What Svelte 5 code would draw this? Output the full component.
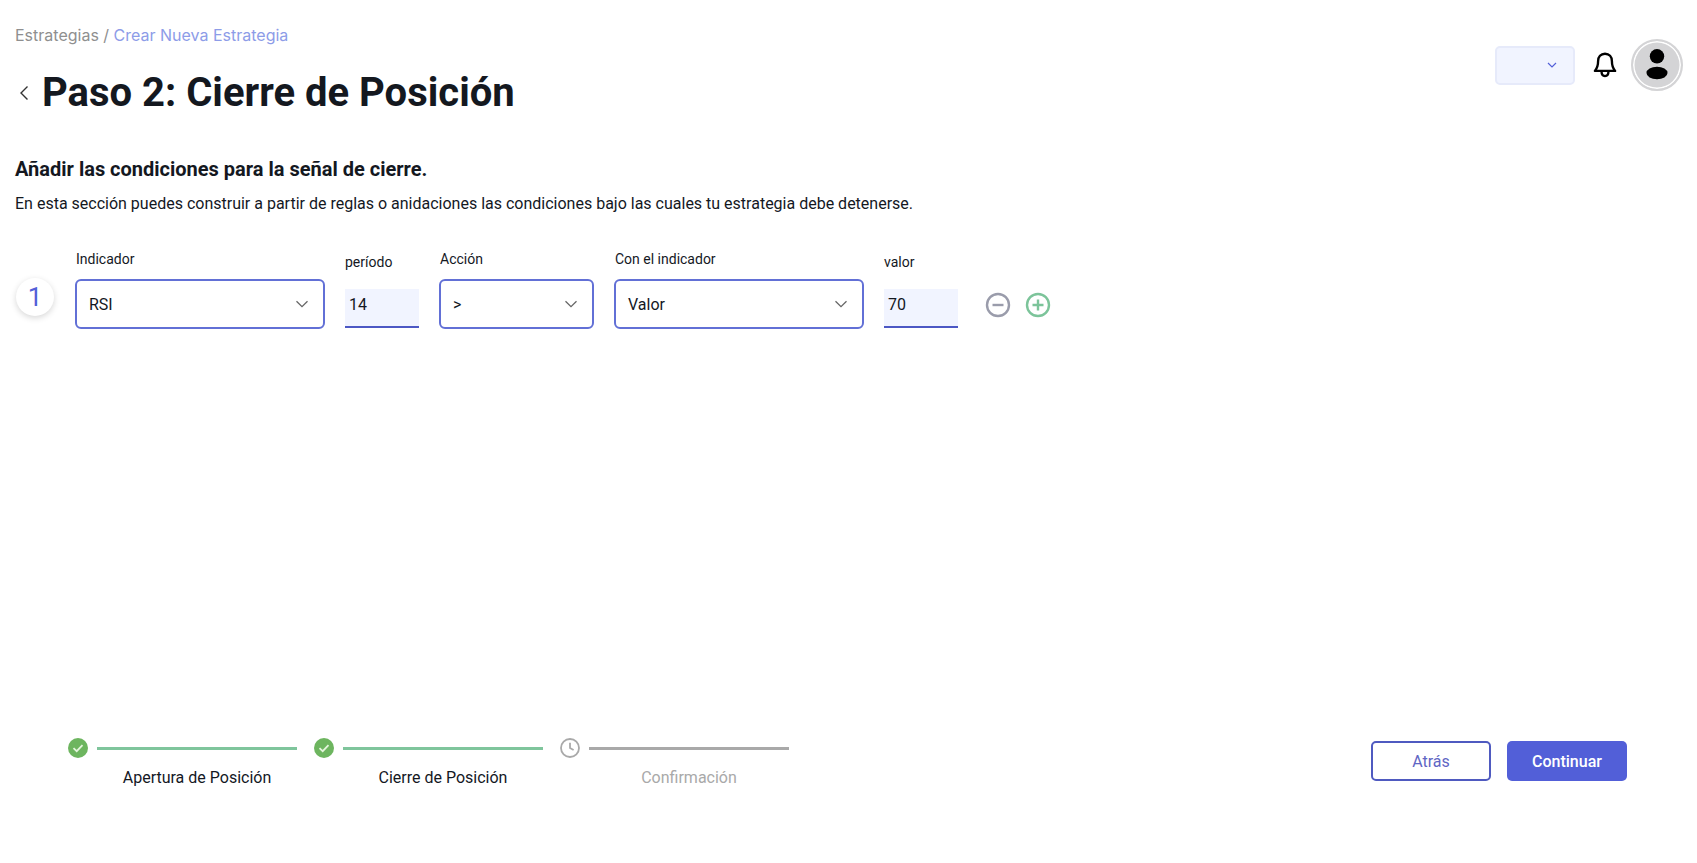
<script lang="ts">
  const steps = [
    { label: 'Apertura de Posición', state: 'done' },
    { label: 'Cierre de Posición', state: 'done' },
    { label: 'Confirmación', state: 'pending' },
  ]
</script>

{#snippet chevron()}
  <svg class="chevron" width="14" height="8" viewBox="0 0 14 8" fill="none" stroke="currentColor" stroke-width="1.3">
    <path d="M1.5 1.2 7 6.7l5.5-5.5"></path>
  </svg>
{/snippet}

{#snippet select(label: string, value: string, width: number)}
  <div class="field" style="width: {width}px">
    <span class="field__label">{label}</span>
    <div class="select">
      <span>{value}</span>
      {@render chevron()}
    </div>
  </div>
{/snippet}

{#snippet numeric(label: string, value: string)}
  <div class="field field--num">
    <span class="field__label">{label}</span>
    <div class="num">{value}</div>
  </div>
{/snippet}

<div class="page">
  <header class="top">
    <div>
      <div class="crumbs">Estrategias / <span class="crumbs__current">Crear Nueva Estrategia</span></div>
      <div class="title-row">
        <svg class="back" width="10" height="16" viewBox="0 0 10 16" fill="none" stroke="#333" stroke-width="1.4">
          <path d="M8.5 1.5 2 8l6.5 6.5"></path>
        </svg>
        <h1>Paso 2: Cierre de Posición</h1>
      </div>
    </div>
    <div class="tools">
      <div class="lang">
        <svg width="10" height="6" viewBox="0 0 10 6" fill="none" stroke="#5360d8" stroke-width="1.2">
          <path d="M1 1l4 4 4-4"></path>
        </svg>
      </div>
      <svg class="bell" width="26" height="28" viewBox="0 0 24 26" fill="none" stroke="#000" stroke-width="2.2" stroke-linejoin="round">
        <path d="M12 2.5c-4 0-6.4 3-6.4 6.8 0 5-1.1 7-3 9.2h18.8c-1.9-2.2-3-4.2-3-9.2 0-3.8-2.4-6.8-6.4-6.8z"></path>
        <path d="M8.8 19c0 2.6 1.3 4.2 3.2 4.2s3.2-1.6 3.2-4.2"></path>
      </svg>
      <div class="avatar">
        <svg width="32" height="36" viewBox="0 0 32 36" fill="#000">
          <circle cx="16" cy="9.3" r="7.2"></circle>
          <ellipse cx="16" cy="26" rx="10.5" ry="6.2"></ellipse>
        </svg>
      </div>
    </div>
  </header>

  <section class="intro">
    <h2>Añadir las condiciones para la señal de cierre.</h2>
    <p>En esta sección puedes construir a partir de reglas o anidaciones las condiciones bajo las cuales tu estrategia debe detenerse.</p>
  </section>

  <section class="rule">
    <div class="rule__index">1</div>
    {@render select('Indicador', 'RSI', 250)}
    {@render numeric('período', '14')}
    {@render select('Acción', '>', 155)}
    {@render select('Con el indicador', 'Valor', 250)}
    {@render numeric('valor', '70')}
    <div class="rule__actions">
      <svg width="26" height="26" viewBox="0 0 26 26" fill="none" stroke="#9a9cab" stroke-width="2.4">
        <circle cx="13" cy="13" r="11"></circle>
        <path d="M7.5 13h11"></path>
      </svg>
      <svg width="26" height="26" viewBox="0 0 26 26" fill="none" stroke="#7cc49a" stroke-width="2.4">
        <circle cx="13" cy="13" r="11"></circle>
        <path d="M7.5 13h11M13 7.5v11"></path>
      </svg>
    </div>
  </section>

  <footer class="bottom">
    <div class="steps">
      {#each steps as step}
        <div class="step" class:step--pending={step.state === 'pending'}>
          <div class="step__track">
            {#if step.state === 'done'}
              <svg width="20" height="20" viewBox="0 0 20 20">
                <circle cx="10" cy="10" r="10" fill="#6db55f"></circle>
                <path d="M5.5 10.2 8.7 13.2 14.5 7.2" fill="none" stroke="#e4f5dc" stroke-width="1.8"></path>
              </svg>
            {:else}
              <svg width="20" height="20" viewBox="0 0 20 20" fill="none" stroke="#a9a9a9" stroke-width="1.8">
                <circle cx="10" cy="10" r="9"></circle>
                <path d="M10 4.8V10l3.6 2"></path>
              </svg>
            {/if}
            <span class="step__line"></span>
          </div>
          <span class="step__label">{step.label}</span>
        </div>
      {/each}
    </div>
    <div class="buttons">
      <button class="btn btn--ghost" type="button">Atrás</button>
      <button class="btn btn--solid" type="button">Continuar</button>
    </div>
  </footer>
</div>

<style>
  :global(body) {
    margin: 0;
    background: #fff;
  }

  .page {
    display: flex;
    flex-direction: column;
    box-sizing: border-box;
    height: 863px;
    padding: 0 14px 0 15px;
    font-family: Roboto, "Liberation Sans", sans-serif;
    color: #14181f;
  }

  /* ── Header ── */
  .top {
    display: flex;
    justify-content: space-between;
    align-items: flex-start;
    padding-top: 25px;
  }

  .crumbs {
    font-family: Inter, "Liberation Sans", sans-serif;
    font-size: 16px;
    line-height: 20px;
    color: #8f8f8f;
  }

  .crumbs__current {
    color: #8d9ce8;
  }

  .title-row {
    display: flex;
    align-items: center;
    gap: 13px;
    margin-top: 24px;
    padding-left: 4px;
  }

  h1 {
    margin: 0;
    font-size: 40px;
    line-height: 48px;
    font-weight: 700;
    color: #14181f;
  }

  .tools {
    display: flex;
    align-items: center;
    margin-top: 14px;
  }

  .lang {
    display: flex;
    align-items: center;
    justify-content: flex-end;
    box-sizing: border-box;
    width: 80px;
    height: 39px;
    padding-right: 16px;
    background: #f1f4ff;
    border: 2px solid #e6eafa;
    border-radius: 5px;
  }

  .bell {
    margin: 0 13px 0 17px;
  }

  .avatar {
    display: flex;
    align-items: center;
    justify-content: center;
    box-sizing: border-box;
    width: 52px;
    height: 52px;
    border-radius: 50%;
    background: #d4d4d6;
    border: 2px solid #d4d4d6;
    box-shadow: inset 0 0 0 1.5px #fff;
  }

  /* ── Intro ── */
  .intro {
    margin-top: 39px;
  }

  h2 {
    margin: 0;
    font-size: 20px;
    line-height: 26px;
    font-weight: 700;
  }

  p {
    margin: 10px 0 0;
    font-size: 16px;
    line-height: 24px;
  }

  /* ── Rule row ── */
  .rule {
    display: flex;
    align-items: flex-end;
    margin-top: 34px;
  }

  .rule__index {
    display: flex;
    align-items: center;
    justify-content: center;
    width: 38px;
    height: 38px;
    margin: 0 21px 13px 1px;
    border-radius: 50%;
    background: #fff;
    box-shadow: 0 2px 6px rgba(0, 0, 0, 0.16);
    font-size: 26px;
    font-weight: 400;
    color: #5360d8;
  }

  .field {
    display: flex;
    flex-direction: column;
    margin-right: 20px;
  }

  .field--num {
    width: 74px;
    margin-bottom: 1px;
  }

  .field__label {
    font-size: 14px;
    line-height: 18px;
    margin: 0 0 11px 1px;
  }

  .field--num .field__label {
    margin: 0 0 18px 0;
  }

  .select {
    display: flex;
    align-items: center;
    justify-content: space-between;
    box-sizing: border-box;
    height: 50px;
    padding: 0 14px 0 12px;
    border: 2px solid #6270d6;
    border-radius: 6px;
    font-size: 16px;
  }

  .chevron {
    color: #666;
  }

  .num {
    box-sizing: border-box;
    height: 39px;
    padding: 6px 4px 0;
    background: #f1f4ff;
    border-bottom: 2px solid #4c58c4;
    font-size: 16px;
    line-height: 20px;
  }

  .rule__actions {
    display: flex;
    gap: 14px;
    margin: 0 0 11px 7px;
  }

  /* ── Footer ── */
  .bottom {
    display: flex;
    justify-content: space-between;
    align-items: flex-start;
    margin-top: auto;
    padding: 0 56px 75px 53px;
  }

  .steps {
    display: flex;
  }

  .step {
    width: 246px;
    display: flex;
    flex-direction: column;
  }

  .step__track {
    display: flex;
    align-items: center;
    gap: 9px;
  }

  .step__line {
    display: block;
    width: 200px;
    height: 3px;
    background: #7fc59c;
  }

  .step--pending .step__line {
    background: #a9a9a9;
  }

  .step__label {
    width: 238px;
    margin-top: 10px;
    text-align: center;
    font-size: 16px;
    line-height: 20px;
    padding-left: 10px;
  }

  .step--pending .step__label {
    color: #a9a9a9;
  }

  .buttons {
    display: flex;
    gap: 16px;
    margin-top: 3px;
  }

  .btn {
    box-sizing: border-box;
    width: 120px;
    height: 40px;
    border-radius: 5px;
    font-family: inherit;
    font-size: 16px;
  }

  .btn--ghost {
    background: #fff;
    border: 2px solid #4f5ac0;
    color: #5f66c4;
  }

  .btn--solid {
    background: #525fd8;
    border: none;
    color: #fff;
    font-weight: 500;
  }
</style>
